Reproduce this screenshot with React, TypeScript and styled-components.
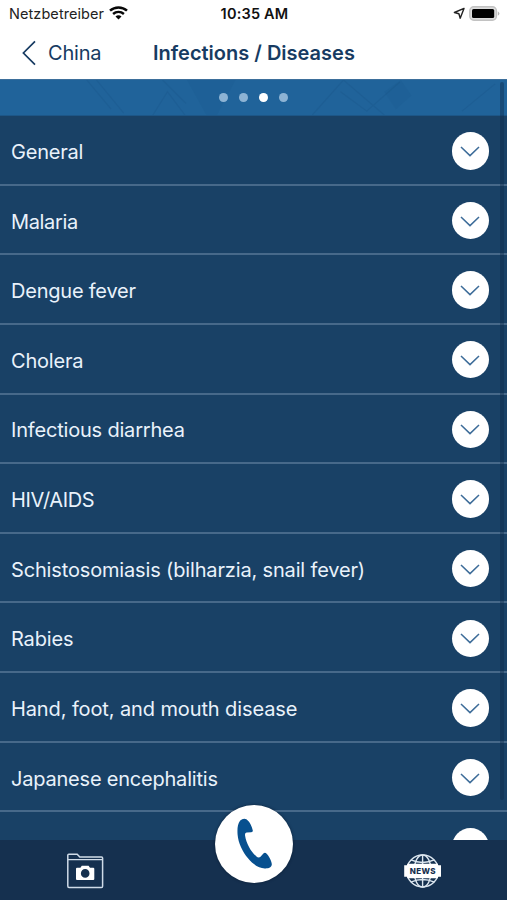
import React from "react";
import styled, { createGlobalStyle } from "styled-components";

const GlobalStyle = createGlobalStyle`
  * { box-sizing: border-box; }
  html, body { margin: 0; padding: 0; overflow: hidden; }
  body { font-family: Inter, "Liberation Sans", sans-serif; }
  button { font: inherit; border: 0; padding: 0; background: none; color: inherit; }
`;

const Screen = styled.main`
  position: relative;
  width: 507px;
  height: 900px;
  display: flex;
  flex-direction: column;
  overflow: hidden;
  background: #194166;
`;

const StatusBar = styled.div`
  flex: none;
  height: 28px;
  padding: 0 7px 2px 9px;
  display: grid;
  grid-template-columns: 1fr auto 1fr;
  align-items: center;
  background: #fff;
  color: #111;
`;

const Carrier = styled.div`
  display: flex;
  align-items: center;
  gap: 5px;
  font-size: 14.5px;
  letter-spacing: 0.07px;
  color: #222;
`;

const Clock = styled.div`
  font-size: 14.5px;
  font-weight: 600;
  letter-spacing: 0.2px;
`;

const Indicators = styled.div`
  display: flex;
  justify-content: flex-end;
  align-items: center;
  gap: 4px;
`;

const NavBar = styled.header`
  flex: none;
  height: 51px;
  padding: 0 22px 2px 21px;
  display: flex;
  align-items: center;
  background: #fff;
  color: #173b62;
`;

const BackButton = styled.button`
  width: 132px;
  display: flex;
  align-items: center;
  gap: 11px;
  font-size: 20px;
  letter-spacing: -0.2px;
`;

const Title = styled.h1`
  margin: 0;
  font-size: 20px;
  font-weight: 600;
  letter-spacing: 0;
  white-space: nowrap;
`;

const Pager = styled.div`
  position: relative;
  flex: none;
  height: 37px;
  display: flex;
  align-items: center;
  justify-content: center;
  gap: 11px;
  background: #20639a;
  border-top: 1px solid #3d6f9b;
  border-bottom: 1px solid #1d5687;
`;

const MapTexture = styled.svg`
  position: absolute;
  inset: 0;
  width: 100%;
  height: 100%;
`;

const Dot = styled.span<{ $active: boolean }>`
  position: relative;
  width: 8.8px;
  height: 8.8px;
  border-radius: 50%;
  background: ${(p) => (p.$active ? "#fff" : "#8db3d4")};
`;

const List = styled.ul`
  flex: 1;
  min-height: 0;
  margin: 0;
  padding: 0;
  list-style: none;
  overflow: hidden;
`;

const Row = styled.li`
  height: 69.63px;
  padding: 0.2px 18px 0 11px;
  display: flex;
  align-items: center;
  justify-content: space-between;
  background: linear-gradient(#47698a, #47698a) left bottom / 100% 2px no-repeat;
`;

const Label = styled.span<{ $tracking: number }>`
  padding-top: 2px;
  font-size: 20px;
  letter-spacing: ${(p) => p.$tracking}px;
  color: #e9f2fb;
  white-space: nowrap;
`;

const Expand = styled.button`
  width: 37.4px;
  height: 37.4px;
  border-radius: 50%;
  background: #fff;
  display: grid;
  place-items: center;
`;

const ScrollThumb = styled.div`
  position: absolute;
  top: 82px;
  right: 3px;
  width: 4px;
  height: 718px;
  border-radius: 2px;
  background: rgba(12, 40, 70, 0.4);
`;

const TabBar = styled.nav`
  flex: none;
  height: 60px;
  padding: 1px 65px 0 66px;
  display: flex;
  align-items: center;
  justify-content: space-between;
  background: #15304f;
`;

const Tab = styled.button`
  height: 38px;
  display: grid;
  place-items: center;
`;

const CallButton = styled.button`
  position: absolute;
  left: 215px;
  top: 805px;
  width: 78px;
  height: 78px;
  border-radius: 50%;
  background: #fff;
  box-shadow: 0 0 3px rgba(5, 22, 42, 0.7);
`;

const rows = [
  { label: "General", tracking: -0.2 },
  { label: "Malaria", tracking: -0.35 },
  { label: "Dengue fever", tracking: -0.22 },
  { label: "Cholera", tracking: -0.2 },
  { label: "Infectious diarrhea", tracking: -0.19 },
  { label: "HIV/AIDS", tracking: -0.37 },
  { label: "Schistosomiasis (bilharzia, snail fever)", tracking: -0.155 },
  { label: "Rabies", tracking: -0.15 },
  { label: "Hand, foot, and mouth disease", tracking: -0.11 },
  { label: "Japanese encephalitis", tracking: -0.21 },
  { label: "", tracking: 0 },
];

const WifiIcon = () => (
  <svg width="19" height="14" viewBox="0 0 19 14" fill="none" stroke="#080808">
    <path d="M1 4.7C5.8 .3 13.2 .3 18 4.7" strokeWidth="2.5" />
    <path d="M4.1 8C7.2 5.1 11.8 5.1 14.9 8" strokeWidth="2.4" />
    <path d="M9.5 13.4 6.5 10.4C8.2 8.9 10.8 8.9 12.5 10.4Z" fill="#080808" stroke="none" />
  </svg>
);

const LocationIcon = () => (
  <svg width="13" height="13" viewBox="0 0 13 13" fill="none" stroke="#222" strokeWidth="1.4" strokeLinejoin="round">
    <path d="M12 1.4 2.4 5.5 6.9 6.7 8.2 11.2Z" />
  </svg>
);

const BatteryIcon = () => (
  <svg width="31" height="15" viewBox="0 0 31 15">
    <rect x=".8" y=".8" width="26.6" height="13.4" rx="4" fill="#ddd" stroke="#c2c2c2" strokeWidth="1.4" />
    <rect x="3" y="2.9" width="22.2" height="9.2" rx="1.6" fill="#000" />
    <path d="M28.8 5.2Q32 7.5 28.8 9.8Z" fill="#b5b5b5" />
  </svg>
);

const FolderIcon = () => (
  <svg width="38" height="36" viewBox="0 0 38 36" fill="none">
    <path
      d="M1.8 33V2.2Q1.8 1.2 2.8 1.2H11.2L13.8 4H35.5Q36.6 4 36.6 5V33.2Q36.6 34.5 35.4 34.5H3Q1.8 34.5 1.8 33Z"
      stroke="#cfdbe8"
      strokeWidth="1.5"
    />
    <path d="M2 6.7H36.5" stroke="#cfdbe8" strokeWidth="1.3" />
    <path
      fillRule="evenodd"
      fill="#fff"
      d="M11 14.7H14.4L15.8 12.7H22.6L24 14.7H27.2Q28.3 14.7 28.3 15.8V25.9Q28.3 27 27.2 27H11Q10 27 10 25.9V15.8Q10 14.7 11 14.7ZM19.2 16.1A4.3 4.3 0 1 0 19.2 24.7A4.3 4.3 0 1 0 19.2 16.1Z"
    />
  </svg>
);

const NewsIcon = () => (
  <svg width="38" height="36" viewBox="0 0 38 36">
    <g fill="none" stroke="#dce6ef" strokeWidth="1.4">
      <circle cx="18.6" cy="18" r="16" />
      <ellipse cx="18.6" cy="18" rx="8.6" ry="16" />
      <path d="M18.6 2V34M6.8 6.9Q18.6 12 30.4 6.9M6.8 29.1Q18.6 24 30.4 29.1" />
    </g>
    <path d="M.2 12.2H3.2V10.8H34V12.2H37V23.8H34V25.2H3.2V23.8H.2Z" fill="#fff" />
    <text
      x="18.8"
      y="20.8"
      textAnchor="middle"
      letterSpacing="0.4"
      fontFamily="Inter, sans-serif"
      fontSize="8"
      fontWeight="800"
      fill="#15304f"
    >
      NEWS
    </text>
  </svg>
);

const PhoneIcon = () => (
  <svg width="78" height="78" viewBox="0 0 78 78" fill="#07508f">
    <path d="M25.2 15.6C26.8 13.8 29.4 13 31.4 14.2C34.4 16.2 37 21.4 37.8 25.4C38 26.7 37.4 27.2 36.2 27.2L31.8 27.5C30.3 27.7 29.8 28.8 30.1 30.7C31.3 38.5 35.9 46.6 41.2 51.2C42.8 52.6 44.2 52.8 45.5 51.7L48.4 48.6C49.3 47.6 50.4 47.5 51.4 48.4C54.1 51 57 56.5 56.8 59.5C56.5 62.4 53.6 63.6 49.8 63.4C43.6 63 38.2 59.6 33 53.3C27.4 46.5 23.3 38.1 22.6 29.8C22.2 24.5 22.4 19 25.2 15.6Z" />
  </svg>
);

export default function App() {
  return (
    <Screen>
      <GlobalStyle />
      <StatusBar>
        <Carrier>
          Netzbetreiber
          <WifiIcon />
        </Carrier>
        <Clock>10:35 AM</Clock>
        <Indicators>
          <LocationIcon />
          <BatteryIcon />
        </Indicators>
      </StatusBar>
      <NavBar>
        <BackButton>
          <svg width="16" height="26" viewBox="0 0 16 26" fill="none" stroke="#173b62" strokeWidth="1.7">
            <path d="M14 1.4 2.4 13 14 24.6" />
          </svg>
          China
        </BackButton>
        <Title>Infections / Diseases</Title>
      </NavBar>
      <Pager>
        <MapTexture viewBox="0 0 507 36" fill="none" stroke="#174f80" strokeOpacity=".22" strokeWidth="1.2">
          <path d="M82 0 107 30M92 0 120 34M150 36 165 12 183 36M160 0 184 24M314 36 346 0 388 36M343 12 370 32 404 2M468 32 502 4" />
          <path d="M185 0H235L216 36H205ZM388 12 405 0 416 16 400 30Z" fill="#174f80" fillOpacity=".1" stroke="none" />
        </MapTexture>
        {[0, 1, 2, 3].map((i) => (
          <Dot key={i} $active={i === 2} />
        ))}
      </Pager>
      <List>
        {rows.map((row, i) => (
          <Row key={i}>
            <Label $tracking={row.tracking}>{row.label}</Label>
            <Expand aria-label="Expand">
              <svg width="20" height="12" viewBox="0 0 20 12" fill="none" stroke="#3d6c99" strokeWidth="1.5">
                <path d="M1 2 10 10.6 19 2" />
              </svg>
            </Expand>
          </Row>
        ))}
      </List>
      <TabBar>
        <Tab aria-label="Photos">
          <FolderIcon />
        </Tab>
        <Tab aria-label="News">
          <NewsIcon />
        </Tab>
      </TabBar>
      <ScrollThumb />
      <CallButton aria-label="Call">
        <PhoneIcon />
      </CallButton>
    </Screen>
  );
}
